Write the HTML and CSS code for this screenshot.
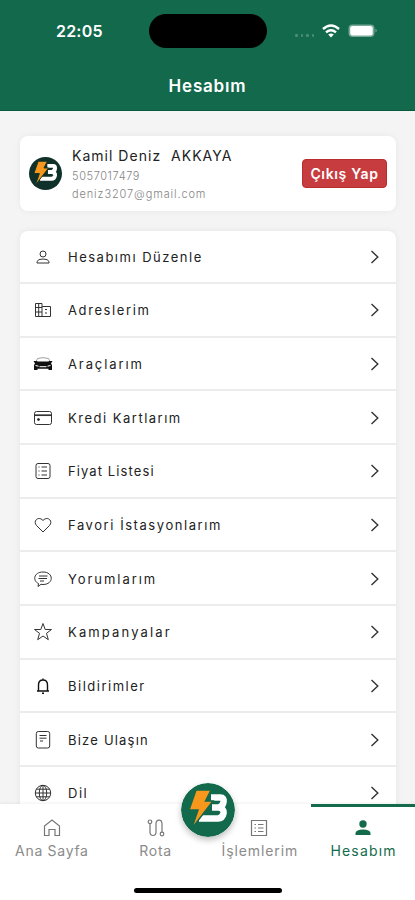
FILE: index.html
```html
<!DOCTYPE html>
<html lang="tr">
<head>
<meta charset="utf-8">
<meta name="viewport" content="width=device-width, initial-scale=1">
<title>Hesabım</title>
<link rel="stylesheet" href="styles.css">
</head>
<body>
<svg class="defs" width="0" height="0">
  <symbol id="logo" viewBox="0 0 54 54">
    <circle cx="27" cy="27" r="27" fill="var(--disc)"/>
    <path d="M30 14.500H39.500Q43 14.500 42.600 18.500Q42.200 23.500 37.500 24.600Q43.300 25.500 42.600 30Q41.500 35.500 37 35.500H18M31 24.600H38" fill="none" stroke="#fff" stroke-width="6.500"/>
    <path d="M15 7H30L24.500 18H32L10.500 46L17 27H8Z" fill="#f7981d" stroke="var(--disc)" stroke-width="1.500"/>
  </symbol>
  <symbol id="chev" viewBox="0 0 10 14"><path d="M1.500 1L7.800 7L1.500 13" fill="none" stroke="#333" stroke-width="1.400"/></symbol>
</svg>
<div class="screen">
  <header class="header">
    <div class="status">
      <span class="time">22:05</span>
      <span class="island"></span>
      <span class="signals">
        <span class="dots"><i></i><i></i><i></i><i></i></span>
        <svg class="wifi" viewBox="0 0 18 14"><g fill="none" stroke="#fff" stroke-width="2.400"><path d="M1 5Q9-2 17 5"/><path d="M4 8.300Q9 4 14 8.300"/></g><path d="M6.200 10.500Q9 8.300 11.800 10.500L9 13.500Z" fill="#fff"/></svg>
        <svg class="battery" viewBox="0 0 30 14"><rect x=".5" y=".5" width="26" height="12.500" rx="4" fill="#78a895"/><rect x="2.200" y="2" width="22.500" height="9.500" rx="2.500" fill="#fff"/><path d="M27.500 4.500Q30 6.500 27.500 8.500Z" fill="#78a895"/></svg>
      </span>
    </div>
    <h1 class="title">Hesabım</h1>
  </header>
  <main class="content">
    <section class="profile">
      <svg class="avatar"><use href="#logo"/></svg>
      <div class="who">
        <p class="name">Kamil Deniz&nbsp; AKKAYA</p>
        <p class="phone">5057017479</p>
        <p class="mail">deniz3207@gmail.com</p>
      </div>
      <button class="logout">Çıkış Yap</button>
    </section>
    <ul class="menu">
      <li><svg class="ic" viewBox="0 0 20 20"><circle cx="10" cy="7" r="3"/><path d="M4 16V14.500Q5 12 10 12T16 14.500V16Z"/></svg><span class="t1">Hesabımı Düzenle</span><svg class="chev"><use href="#chev"/></svg></li>
      <li><svg class="ic" viewBox="0 0 20 20"><path d="M2.500 3.500H9V16.500H2.500ZM9 6.500H17.500V16.500H9M2.500 7.500H9M2.500 12H9M5.700 3.500V16.500M12 9.500H14M12 13H14"/></svg><span class="t2">Adreslerim</span><svg class="chev"><use href="#chev"/></svg></li>
      <li><svg class="ic" viewBox="0 0 20 20"><path d="M3 7.500L4.500 4.500Q10 2.800 15.500 4.500L17 7.500" stroke="#888" stroke-width=".8"/><path d="M.5 7H3.500L5 7.500H15L16.500 7H19.500L18 9.500L19 11V16H15.500V14.700H4.500V16H1V11L2 9.500Z" fill="#111" stroke="none"/><path d="M2.500 11.500L5.500 12.200M17.500 11.500L14.500 12.200M6.500 12.700H13.500" stroke="#fff"/></svg><span class="t3">Araçlarım</span><svg class="chev"><use href="#chev"/></svg></li>
      <li><svg class="ic" viewBox="0 0 20 20"><rect x="1.500" y="3.500" width="17" height="13" rx="2"/><path d="M1.500 7.200H18.500" stroke-width="1.700"/><circle cx="5.500" cy="11.500" r="1" fill="#222"/></svg><span class="t4">Kredi Kartlarım</span><svg class="chev"><use href="#chev"/></svg></li>
      <li><svg class="ic" viewBox="0 0 20 20"><rect x="3" y="2.500" width="14" height="15" rx="2"/><path d="M8.500 6H14M8.500 10H14M8.500 14H14M5.500 6H6.500M5.500 10H6.500M5.500 14H6.500"/></svg><span class="t5">Fiyat Listesi</span><svg class="chev"><use href="#chev"/></svg></li>
      <li><svg class="ic" viewBox="0 0 20 20"><path d="M10 17L3.500 10.500C-.5 6 5.500 .5 10 5.500C14.500 .5 20.500 6 16.500 10.500Z"/></svg><span class="t6">Favori İstasyonlarım</span><svg class="chev"><use href="#chev"/></svg></li>
      <li><svg class="ic" viewBox="0 0 20 20"><path d="M5 17.500L5.500 14.500C-.5 12 .5 3 10 3C21 3 21 15.500 10 15.500L8 15.300ZM6 7H14.500M5.500 9.500H14M7 12H11"/></svg><span class="t7">Yorumlarım</span><svg class="chev"><use href="#chev"/></svg></li>
      <li><svg class="ic" viewBox="0 0 20 20"><path d="M10 1.500L12.200 7.500H18.500L13.500 11.300L15.300 17.700L10 14L4.700 17.700L6.500 11.300L1.500 7.500H7.800Z"/></svg><span class="t8">Kampanyalar</span><svg class="chev"><use href="#chev"/></svg></li>
      <li><svg class="ic dark" viewBox="0 0 20 20"><path d="M4 15H16M5.500 15V9Q5.500 4 10 4T14.500 9V15M10 2.500V4M9 17.200H11"/></svg><span class="t9">Bildirimler</span><svg class="chev"><use href="#chev"/></svg></li>
      <li><svg class="ic" viewBox="0 0 20 20"><rect x="3.300" y="1.500" width="13.400" height="16.500" rx="2"/><path d="M6.500 5.500H13.500M6.500 8.200H13.500M7 11H10"/></svg><span class="t10">Bize Ulaşın</span><svg class="chev"><use href="#chev"/></svg></li>
      <li><svg class="ic" viewBox="0 0 20 20"><circle cx="10" cy="10" r="7.700"/><ellipse cx="10" cy="10" rx="3.700" ry="7.700"/><path d="M10 2.300V17.700M2.300 10H17.700M3.300 6.200H16.700M3.300 13.800H16.700"/></svg><span class="t11">Dil</span><svg class="chev"><use href="#chev"/></svg></li>
    </ul>
  </main>
  <nav class="tabs">
    <a class="tab"><svg viewBox="0 0 20 20"><path d="M2.500 8L10 2L17.500 8V17.500H13V11.500H7V17.500H2.500Z"/></svg><span class="n1">Ana Sayfa</span></a>
    <a class="tab"><svg viewBox="0 0 20 20"><circle cx="4" cy="3.800" r="1.800"/><circle cx="16" cy="16" r="1.800"/><path d="M4 5.600V14Q4 17.500 7 17.500T10 14V6Q10 2.200 13 2.200T16 6V14"/></svg><span class="n2">Rota</span></a>
    <a class="tab"><svg viewBox="0 0 20 20"><path d="M2.500 2.500H17.500V17.500H2.500ZM9 6.500H14.500M9 10H14.500M9 13.500H14.500M5.500 6.500H7M5.500 10H7M5.500 13.500H7"/></svg><span class="n3">İşlemlerim</span></a>
    <a class="tab active"><svg viewBox="0 0 20 20"><circle cx="10" cy="6" r="3.700"/><path d="M2.500 17V15Q3 11.500 10 11.500T17.500 15V17Z"/></svg><span class="n4">Hesabım</span></a>
    <svg class="fab"><use href="#logo"/></svg>
    <span class="home"></span>
  </nav>
</div>
</body>
</html>
```
FILE: styles.css
```css
* { box-sizing: border-box; margin: 0; padding: 0; }
body { font-family: Inter, "Noto Sans", sans-serif; background: #f4f4f4; color: #222; }
.defs { display: block; height: 0; }
.screen { width: 415px; height: 900px; display: flex; flex-direction: column; overflow: hidden; background: #f4f4f4; }
.header { flex: none; height: 111px; background: #13694c; border-bottom: 1px solid #075b3c; color: #fff; }
.status { height: 62px; display: grid; grid-template-columns: 149px 118px 1fr; align-items: center; }
.time { padding: 0 0 1px 56px; font-size: 16px; font-weight: 600; letter-spacing: .2px; }
.island { height: 34px; border-radius: 17px; background: #000; }
.signals { display: flex; align-items: center; padding-left: 28px; }
.dots { display: flex; gap: 3px; width: 21px; margin: 9px 6px 0 0; }
.dots i { width: 2.500px; height: 2.500px; border-radius: 50%; background: #4d8d73; }
.wifi { width: 18px; height: 14px; margin-right: 8px; }
.battery { width: 30px; height: 14px; }
.title { font-size: 17px; font-weight: 600; line-height: 22px; margin-top: 13px; text-align: center; letter-spacing: .8px; }
.content { flex: 1; min-height: 0; padding: 25px 19px 0 20px; }
.profile { height: 75px; display: flex; align-items: center; padding: 0 9px; border-radius: 8px; background: #fff; box-shadow: 0 0 6px rgba(0,0,0,.06); --disc: #10302a; }
.avatar { width: 33px; height: 33px; flex: none; }
.who { flex: 1; margin-left: 10px; white-space: nowrap; padding-top: 2px; }
.name { font-size: 14px; line-height: 20px; letter-spacing: 1.020px; }
.phone, .mail { font-size: 11px; line-height: 17px; color: #858585; letter-spacing: .88px; font-weight: 300; }
.phone { line-height: 20px; letter-spacing: .6px; }
.logout { width: 85px; height: 29px; border: 1px solid #b92c30; border-radius: 4px; background: #c73c3f; color: #fff; font: 600 14px Inter, sans-serif; letter-spacing: .65px; white-space: nowrap; }
.menu { list-style: none; margin-top: 19.500px; border-radius: 8px; background: #fff; box-shadow: 0 0 6px rgba(0,0,0,.07); }
.menu li { height: 53.670px; display: flex; align-items: center; padding: 1px 16px 0 13px; border-bottom: 2px solid #ececec; }
.menu span { flex: 1; margin-left: 15px; font-size: 13px; line-height: 20px; letter-spacing: 1.500px; white-space: nowrap; }
.menu .t2 { letter-spacing: 1.600px; }
.menu .t3 { letter-spacing: 1.900px; }
.menu .t5 { letter-spacing: 1.100px; }
.menu .t6 { letter-spacing: 1.560px; }
.menu .t7 { letter-spacing: 1.950px; }
.menu .t8 { letter-spacing: 2.150px; }
.menu .t10 { letter-spacing: 1.200px; }
.ic { width: 20px; height: 20px; fill: none; stroke: #333; stroke-width: 1; }
.dark { stroke: #111; stroke-width: 1.400; }
.chev { width: 10px; height: 14px; }
.tabs { position: relative; flex: none; height: 96px; display: grid; grid-template-columns: repeat(4, 1fr); background: #fff; box-shadow: 0 -1px 3px rgba(0,0,0,.06); }
.tab { display: flex; flex-direction: column; align-items: center; padding-top: 11px; border-top: 3px solid transparent; color: #8b8b8b; height: 70px; }
.tab svg { width: 20px; height: 20px; fill: none; stroke: #777; stroke-width: 1.200; }
.tab span { font-size: 14px; line-height: 20px; margin-top: 3px; letter-spacing: .7px; white-space: nowrap; }
.tab .n3 { letter-spacing: .9px; margin-left: 1px; }
.tab .n4 { letter-spacing: 1.200px; margin-left: 1px; }
.tab.active { border-top-color: #136b4c; color: #136b4c; }
.tab.active svg { fill: #136b4c; stroke: none; }
.fab { position: absolute; left: 181px; top: -21px; width: 54px; height: 54px; border-radius: 50%; box-shadow: 0 3px 6px rgba(0,0,0,.25); --disc: #13694c; }
.home { position: absolute; left: 134px; top: 84px; width: 148px; height: 5px; border-radius: 3px; background: #000; }
```
